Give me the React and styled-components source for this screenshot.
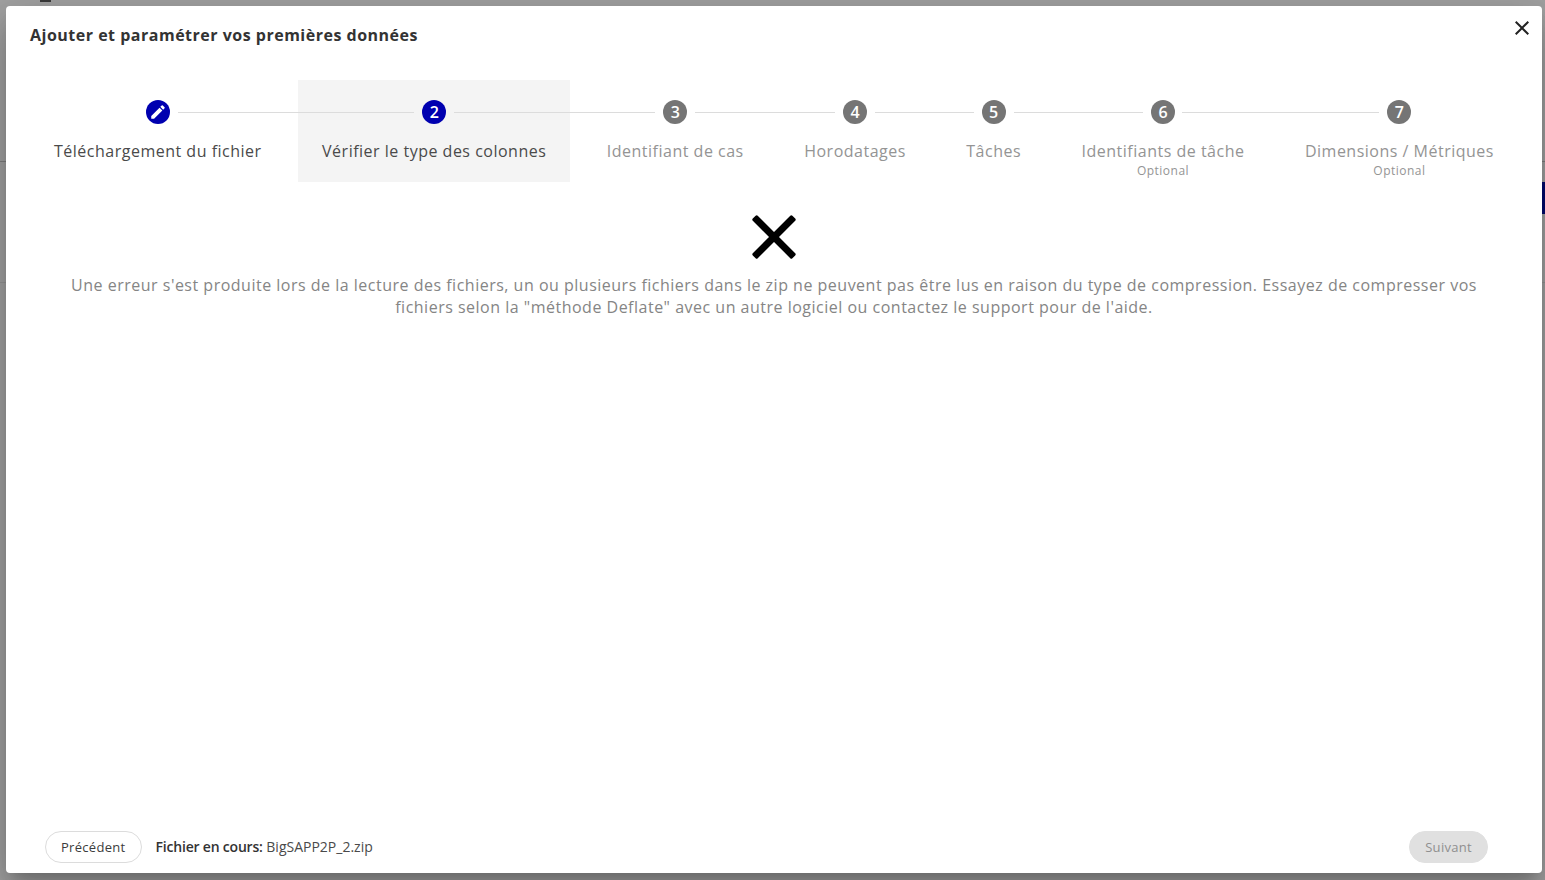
import React from 'react';
import styled, { createGlobalStyle } from 'styled-components';

const GlobalStyle = createGlobalStyle`
	html, body {
		margin: 0;
		padding: 0;
		height: 100%;
		overflow: hidden;
	}
	body {
		font-family: "Open Sans", "Liberation Sans", sans-serif;
	}
`;

const Backdrop = styled.div`
	position: relative;
	box-sizing: border-box;
	width: 100vw;
	height: 100vh;
	padding: 6px 3px 7px 6px;
	background: #a2a2a2;
	overflow: hidden;
`;

const PageRule = styled.div`
	position: absolute;
	left: 0;
	right: 0;
	top: ${p => p.$top}px;
	height: 1px;
	background: ${p => p.$color};
`;

const PageTab = styled.div`
	position: absolute;
	right: 0;
	top: 182px;
	width: 3px;
	height: 32px;
	background: #00096e;
`;

const PageTitleBit = styled.div`
	position: absolute;
	left: 40px;
	top: 0;
	width: 11px;
	height: 2px;
	background: #3a3a3a;
`;

const Dialog = styled.div`
	position: relative;
	display: flex;
	flex-direction: column;
	height: 100%;
	background: #fff;
	border-radius: 4px;
	box-shadow: 0 11px 15px -7px rgba(0, 0, 0, 0.2), 0 24px 38px 3px rgba(0, 0, 0, 0.14), 0 9px 46px 8px rgba(0, 0, 0, 0.12);
`;

const Header = styled.div`
	display: flex;
	justify-content: space-between;
	align-items: flex-start;
	height: 74px;
	padding: 17px 8px 0 24px;
	box-sizing: border-box;
`;

const Title = styled.h2`
	margin: 0;
	font-size: 16px;
	font-weight: 700;
	line-height: 24px;
	letter-spacing: 0.5px;
	color: #333;
`;

const CloseButton = styled.button`
	display: flex;
	margin-top: -7px;
	padding: 0;
	border: 0;
	background: none;
	color: #222;
	cursor: pointer;
`;

const Stepper = styled.div`
	display: flex;
	justify-content: space-between;
	padding: 0 24px;
`;

const Step = styled.div`
	position: relative;
	display: flex;
	flex-direction: column;
	align-items: center;
	box-sizing: border-box;
	height: 102px;
	padding: 20px 24px 0;
	background: ${p => (p.$current ? '#f4f4f4' : 'transparent')};
`;

const Connector = styled.span`
	position: absolute;
	top: 32px;
	right: calc(50% + 20px);
	width: ${p => p.$length}px;
	height: 1px;
	background: #dcdcdc;
`;

const StepIcon = styled.span`
	display: flex;
	align-items: center;
	justify-content: center;
	width: 24px;
	height: 24px;
	border-radius: 50%;
	background: ${p => (p.$active ? '#0000b0' : '#757575')};
	color: #fff;
	font-size: 16px;
	font-weight: 600;
	line-height: 1;
`;

const StepLabel = styled.span`
	margin-top: 16px;
	font-size: 16px;
	line-height: 22px;
	letter-spacing: 0.5px;
	white-space: nowrap;
	color: ${p => (p.$active ? '#4a4a4a' : '#949494')};
`;

const StepOptional = styled.span`
	margin-top: 1px;
	font-size: 12px;
	line-height: 16px;
	letter-spacing: 0.5px;
	color: #949494;
`;

const Content = styled.div`
	flex: 1;
	display: flex;
	flex-direction: column;
	align-items: center;
	padding: 33px 48px 0;
`;

const ErrorMessage = styled.p`
	margin: 15px 0 0;
	font-size: 16px;
	line-height: 22px;
	letter-spacing: 0.5px;
	text-align: center;
	color: #858585;
`;

const Footer = styled.div`
	display: flex;
	align-items: center;
	padding: 0 54px 10px 39px;
`;

const PillButton = styled.button`
	box-sizing: border-box;
	height: 32px;
	padding: 0 15px;
	border: 1px solid ${p => (p.disabled ? '#e0e0e0' : '#dcdcdc')};
	border-radius: 16px;
	background: ${p => (p.disabled ? '#e0e0e0' : '#fff')};
	color: ${p => (p.disabled ? '#8f8f8f' : '#3c3c3c')};
	font-family: inherit;
	font-size: 13px;
	letter-spacing: 0.3px;
`;

const CurrentFile = styled.div`
	flex: 1;
	margin-left: 14px;
	margin-top: -1px;
	font-size: 14px;
	color: #4a4a4a;

	strong {
		font-weight: 600;
		letter-spacing: -0.2px;
		color: #333;
	}
`;

const steps = [
	{ label: 'Téléchargement du fichier', done: true },
	{ label: 'Vérifier le type des colonnes', line: 236, current: true },
	{ label: 'Identifiant de cas', line: 201 },
	{ label: 'Horodatages', line: 140 },
	{ label: 'Tâches', line: 99 },
	{ label: 'Identifiants de tâche', line: 129, optional: true },
	{ label: 'Dimensions / Métriques', line: 197, optional: true }
];

function PencilIcon() {
	return (
		<svg width="18" height="18" viewBox="0 0 24 24" fill="currentColor">
			<path d="M3 17.25V21h3.75L17.81 9.94l-3.75-3.75L3 17.25zM20.71 7.04a1 1 0 0 0 0-1.41l-2.34-2.34a1 1 0 0 0-1.41 0l-1.83 1.83 3.75 3.75 1.83-1.83z" />
		</svg>
	);
}

function ErrorCross() {
	return (
		<svg width="44" height="44" viewBox="0 0 44 44" fill="currentColor">
			<rect x="-6" y="18.5" width="56" height="7" rx="1.5" transform="rotate(45 22 22)" />
			<rect x="-6" y="18.5" width="56" height="7" rx="1.5" transform="rotate(-45 22 22)" />
		</svg>
	);
}

export default function App() {
	return (
		<Backdrop>
			<GlobalStyle />
			<PageTitleBit />
			<PageRule $top={161} $color="#7e7e7e" />
			<PageRule $top={282} $color="#949494" />
			<PageTab />
			<Dialog>
				<Header>
					<Title>Ajouter et paramétrer vos premières données</Title>
					<CloseButton aria-label="Fermer">
						<svg width="24" height="24" viewBox="0 0 24 24" fill="currentColor">
							<path d="M19 6.41 17.59 5 12 10.59 6.41 5 5 6.41 10.59 12 5 17.59 6.41 19 12 13.41 17.59 19 19 17.59 13.41 12z" />
						</svg>
					</CloseButton>
				</Header>
				<Stepper>
					{steps.map((step, i) => (
						<Step key={step.label} $current={step.current}>
							{step.line && <Connector $length={step.line} />}
							<StepIcon $active={step.done || step.current}>
								{step.done ? <PencilIcon /> : i + 1}
							</StepIcon>
							<StepLabel $active={step.done || step.current}>{step.label}</StepLabel>
							{step.optional && <StepOptional>Optional</StepOptional>}
						</Step>
					))}
				</Stepper>
				<Content>
					<ErrorCross />
					<ErrorMessage>
						Une erreur s'est produite lors de la lecture des fichiers, un ou plusieurs fichiers dans le zip ne peuvent pas être lus en raison du type de compression. Essayez de compresser vos fichiers selon la "méthode Deflate" avec un autre logiciel ou contactez le support pour de l'aide.
					</ErrorMessage>
				</Content>
				<Footer>
					<PillButton>Précédent</PillButton>
					<CurrentFile>
						<strong>Fichier en cours:</strong> BigSAPP2P_2.zip
					</CurrentFile>
					<PillButton disabled>Suivant</PillButton>
				</Footer>
			</Dialog>
		</Backdrop>
	);
}
